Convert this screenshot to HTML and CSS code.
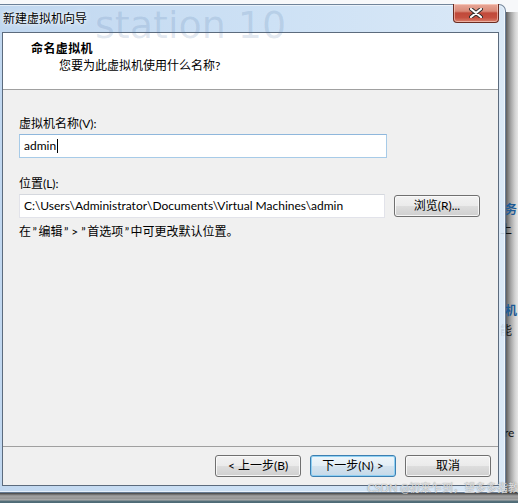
FILE: index.html
```html
<!DOCTYPE html>
<html lang="zh-CN">
<head>
<meta charset="utf-8">
<title>新建虚拟机向导</title>
<link rel="stylesheet" href="styles.css">
</head>
<body>
<div class="desktop">
  <div class="behind-top">ware</div>
  <div class="behind-right">
    <span class="frag frag-blue frag-1">务</span>
    <span class="frag frag-2">上</span>
    <span class="frag frag-blue frag-3">机</span>
    <span class="frag frag-4">能</span>
    <span class="frag frag-5">re</span>
  </div>
  <div class="behind-bottom"></div>

  <div class="dialog">
    <div class="titlebar">
      <span class="glass-text">station 10</span>
      <span class="title">新建虚拟机向导</span>
      <span class="close">
        <svg width="14" height="10" viewBox="0 0 14 10">
          <path d="M2 1 L12 9 M12 1 L2 9" stroke="#2c2c2c" stroke-width="4" stroke-linecap="round"/>
          <path d="M2 1 L12 9 M12 1 L2 9" stroke="#ffffff" stroke-width="2.2" stroke-linecap="round"/>
        </svg>
      </span>
    </div>
    <div class="client">
      <div class="header">
        <div class="h-title">命名虚拟机</div>
        <div class="h-sub">您要为此虚拟机使用什么名称?</div>
      </div>
      <div class="content">
        <div class="field">
          <div class="label">虚拟机名称(V):</div>
          <div class="input input-focus">admin<span class="caret"></span></div>
        </div>
        <div class="field field-loc">
          <div class="label">位置(L):</div>
          <div class="row">
            <div class="input">C:\Users\Administrator\Documents\Virtual Machines\admin</div>
            <span class="btn">浏览(R)...</span>
          </div>
        </div>
        <div class="hint">在<span class="q">”</span>编辑<span class="q">”</span><span class="q">&gt;</span><span class="q">”</span>首选项<span class="q">”</span>中可更改默认位置。</div>
      </div>
      <div class="footer">
        <span class="btn">&lt; 上一步(B)</span>
        <span class="btn btn-default">下一步(N) &gt;</span>
        <span class="btn">取消</span>
      </div>
    </div>
  </div>

  <div class="watermark">CSDN @初来乍到，望多多指教</div>
</div>
</body>
</html>
```

FILE: styles.css
```css
* { box-sizing: border-box; }

body {
  margin: 0;
  width: 518px;
  height: 503px;
  overflow: hidden;
  background: #ffffff;
  font-family: Lato, "Noto Sans CJK SC", sans-serif;
  font-size: 12px;
  color: #000;
}

.desktop {
  position: relative;
  width: 518px;
  height: 503px;
  overflow: hidden;
  background: #f7f8fa;
}

/* window behind the dialog */
.behind-top {
  position: absolute;
  left: 0;
  top: -21px;
  font-family: "DejaVu Sans", sans-serif;
  font-size: 25px;
  line-height: 25px;
  color: #3b4b5e;
}

.behind-right {
  position: absolute;
  left: 506px;
  top: 12px;
  width: 12px;
  height: 481px;
  background: linear-gradient(to right, #5e5e5e 0, #7e7e7e 2px, #a8a8a8 5px, #d2d2d2 9px, #e6e6e6 12px);
}

.frag {
  position: absolute;
  font-size: 12px;
  line-height: 14px;
  color: #111;
  white-space: nowrap;
}
.frag-blue { color: #1d5a94; font-weight: bold; }
.frag-1 { top: 191px; left: -1px; }
.frag-2 { top: 211px; left: -6px; }
.frag-3 { top: 292px; left: -1px; }
.frag-4 { top: 312px; left: -6px; }
.frag-5 { top: 414px; left: -2px; }

.behind-bottom {
  position: absolute;
  left: 0;
  top: 492px;
  width: 518px;
  height: 11px;
  background: linear-gradient(to bottom, #3e3e3e 0, #5a5a5a 2px, #8c8c8c 3px, #a6a6a6 5px, #8e8e8e 6px, #b0b0b0 8px, #56707a 9px, #4c6a76 11px);
}

/* dialog window */
.dialog {
  position: absolute;
  left: -6px;
  top: 4px;
  width: 512px;
  height: 489px;
  padding: 0 6px 6px 7px;
  border: 1px solid rgba(60, 80, 105, 0.65);
  border-radius: 7px 7px 4px 4px;
  background: linear-gradient(to right, rgba(186, 211, 238, 0.9) 0%, rgba(200, 222, 244, 0.9) 55%, rgba(214, 230, 246, 0.9) 100%);
  box-shadow: inset 0 0 0 1px rgba(255, 255, 255, 0.55);
  display: flex;
  flex-direction: column;
}

.titlebar {
  position: relative;
  height: 27px;
  flex: none;
  display: flex;
  align-items: flex-start;
  justify-content: space-between;
}

.glass-text {
  position: absolute;
  left: 93px;
  top: -3px;
  font-family: "DejaVu Sans", sans-serif;
  font-size: 38px;
  line-height: 46px;
  color: rgba(70, 110, 160, 0.16);
  white-space: nowrap;
}

.title {
  position: relative;
  margin-top: 6px;
  margin-left: 1px;
  line-height: 16px;
  color: #000;
  text-shadow: 0 0 6px rgba(255, 255, 255, 0.9), 0 0 3px rgba(255, 255, 255, 0.9);
}

.close {
  position: relative;
  margin-top: -1px;
  width: 46px;
  height: 19px;
  border: 1px solid #6b2c22;
  border-top: none;
  border-radius: 0 0 4px 4px;
  background: linear-gradient(to bottom, #e9a899 0%, #d98a78 40%, #c0493a 50%, #c55040 75%, #d9806c 100%);
  box-shadow: inset 0 0 0 1px rgba(255, 220, 210, 0.55);
  display: flex;
  align-items: center;
  justify-content: center;
}

.close svg { display: block; margin-top: -1px; }

.client {
  flex: 1;
  display: flex;
  flex-direction: column;
  border: 1px solid #5c6b7d;
  background: #f0f0f0;
}

.header {
  flex: none;
  height: 57px;
  background: #ffffff;
  border-bottom: 1px solid #a0a0a0;
  padding: 8px 0 0 28px;
}

.h-title {
  font-weight: bold;
  line-height: 16px;
  letter-spacing: 0.4px;
}

.h-sub {
  margin-top: 1px;
  margin-left: 28px;
  line-height: 16px;
}

.content {
  flex: 1;
  padding: 26px 18px 0 16px;
  display: flex;
  flex-direction: column;
}

.field {
  display: flex;
  flex-direction: column;
  gap: 2px;
}

.field-loc { margin-top: 18px; }

.label { line-height: 16px; }

.row {
  display: flex;
  align-items: center;
  gap: 9px;
}

.input {
  width: 368px;
  height: 24px;
  background: #ffffff;
  border: 1px solid #e2e3ea;
  border-top-color: #d5d8de;
  padding: 0 4px;
  display: flex;
  align-items: center;
  line-height: 16px;
  white-space: nowrap;
  overflow: hidden;
}

.input-focus {
  border-color: #a7cbe8;
  border-top-color: #8fb7dc;
}

.caret {
  display: inline-block;
  width: 1px;
  height: 14px;
  background: #000;
  margin-left: 1px;
}

.hint {
  margin-top: 6px;
  line-height: 16px;
}

.q {
  display: inline-block;
  padding: 0 1.5px;
}

.footer {
  flex: none;
  height: 39px;
  border-top: 1px solid #a0a0a0;
  display: flex;
  justify-content: flex-end;
  align-items: flex-start;
  gap: 9px;
  padding: 8px 7px 0 0;
}

.btn {
  width: 86px;
  height: 22px;
  flex: none;
  display: flex;
  align-items: center;
  justify-content: center;
  line-height: 16px;
  border: 1px solid #707070;
  border-radius: 3px;
  background: linear-gradient(to bottom, #f2f2f2 0%, #ebebeb 48%, #dddddd 52%, #cfcfcf 100%);
  box-shadow: inset 0 0 0 1px rgba(252, 252, 252, 0.85);
  color: #000;
}

.btn-default {
  border-color: #3c7fb1;
  background: linear-gradient(to bottom, #eef6fb 0%, #e3eef6 48%, #d3e3ef 52%, #c6d9e8 100%);
  box-shadow: inset 0 0 0 1px #8fd0f3;
}

.watermark {
  position: absolute;
  left: 367px;
  top: 481px;
  font-size: 11px;
  line-height: 14px;
  color: rgba(235, 235, 235, 0.9);
  text-shadow: 0 0 1px rgba(90, 90, 90, 0.8);
  white-space: nowrap;
}
```
